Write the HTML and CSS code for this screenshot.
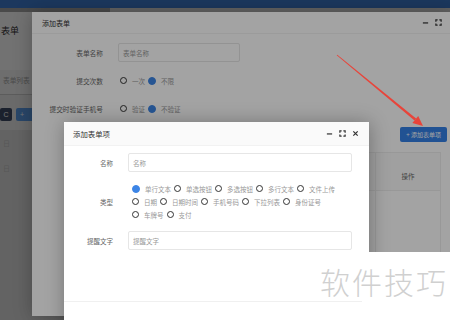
FILE: index.html
```html
<!DOCTYPE html>
<html lang="zh-CN">
<head>
    <meta charset="UTF-8">
    <title>添加表单项</title>
    <link rel="stylesheet" href="styles.css">
</head>
<body>

    <div class="top-bar"></div>

    <div class="page">
        <div class="side">
            <div class="side-head">表单</div>
            <div class="side-tab">表单列表</div>
            <div class="side-tools">
                <button class="btn-dark">C</button>
                <button class="btn-blue">+</button>
            </div>
            <div class="side-row">日</div>
            <div class="side-row">日</div>
        </div>
    </div>

    <div class="shade"></div>

    <!-- 添加表单 -->
    <div class="layer layer-outer">
        <div class="layer-head">
            <span>添加表单</span>
            <div class="layer-ctrl">
                <svg viewBox="0 0 8 8"><path d="M1 4.5h6" /></svg>
                <svg viewBox="0 0 8 8"><path d="M1 3V1h2M5 1h2v2M7 5v2H5M3 7H1V5" /></svg>
            </div>
        </div>
        <div class="outer-body">
            <div class="form-row">
                <label class="form-label wide">表单名称</label>
                <input class="field short" placeholder="表单名称">
            </div>
            <div class="form-row">
                <label class="form-label wide">提交次数</label>
                <div class="radio-group">
                    <span class="radio"><i></i>一次</span>
                    <span class="radio on"><i></i>不限</span>
                </div>
            </div>
            <div class="form-row">
                <label class="form-label wide">提交时验证手机号</label>
                <div class="radio-group">
                    <span class="radio"><i></i>验证</span>
                    <span class="radio on"><i></i>不验证</span>
                </div>
            </div>

            <div class="tool-row">
                <button class="add-btn">+ 添加表单项</button>
            </div>

            <table class="item-table">
                <thead>
                    <tr>
                        <th>名称</th>
                        <th>类型</th>
                        <th>提醒文字</th>
                        <th class="op">操作</th>
                    </tr>
                </thead>
                <tbody>
                    <tr><td></td><td></td><td></td><td></td></tr>
                </tbody>
            </table>
        </div>
    </div>

    <div class="shade shade-top"></div>

    <!-- 添加表单项 -->
    <div class="layer layer-inner">
        <div class="layer-head">
            <span>添加表单项</span>
            <div class="layer-ctrl">
                <svg viewBox="0 0 8 8"><path d="M1 4.5h6" /></svg>
                <svg viewBox="0 0 8 8"><path d="M1 3V1h2M5 1h2v2M7 5v2H5M3 7H1V5" /></svg>
                <svg viewBox="0 0 8 8"><path d="M1.5 1.5l5 5M6.5 1.5l-5 5" /></svg>
            </div>
        </div>
        <div class="inner-body">
            <div class="form-row">
                <label class="form-label">名称</label>
                <input class="field" placeholder="名称">
            </div>
            <div class="form-row auto">
                <label class="form-label">类型</label>
                <div class="radio-group wrap">
                    <span class="radio on"><i></i>单行文本</span>
                    <span class="radio"><i></i>单选按钮</span>
                    <span class="radio"><i></i>多选按钮</span>
                    <span class="radio"><i></i>多行文本</span>
                    <span class="radio"><i></i>文件上传</span>
                    <span class="radio"><i></i>日期</span>
                    <span class="radio"><i></i>日期时间</span>
                    <span class="radio"><i></i>手机号码</span>
                    <span class="radio"><i></i>下拉列表</span>
                    <span class="radio"><i></i>身份证号</span>
                    <span class="radio"><i></i>车牌号</span>
                    <span class="radio"><i></i>支付</span>
                </div>
            </div>
            <div class="form-row">
                <label class="form-label">提醒文字</label>
                <input class="field" placeholder="提醒文字">
            </div>
        </div>
        <div class="layer-foot"></div>
    </div>

    <svg class="arrow" viewBox="0 0 450 320">
        <polygon points="336.7,55.3 337.3,54.7 416.1,118.6 414.5,120.6" />
        <polygon points="423,126 412.4,123.1 418.2,116.1" />
    </svg>

    <div class="wm"><span>软件技巧</span></div>

</body>
</html>
```

FILE: styles.css
```css
* {
    box-sizing: border-box;
}

body {
    margin: 0;
    width: 450px;
    height: 320px;
    overflow: hidden;
    position: relative;
    font-family: "Noto Sans CJK SC", "Noto Sans", sans-serif;
    background-color: #dfdfdf;
    color: #333;
}

.top-bar {
    height: 8px;
    background-color: #3f7fd4;
}

/* page behind the layers */
.side {
    width: 110px;
}

.side-head {
    height: 62px;
    border-top: 4px solid #a8a8a8;
    padding: 12px 0 0 1px;
    font-size: 9px;
    background-color: #fff;
}

.side-tab {
    height: 25px;
    padding: 5px 0 0 3px;
    font-size: 6.7px;
    color: #aaa;
    background-color: #f8f8f8;
    border-bottom: 1px solid #cfcfcf;
}

.side-tools {
    display: flex;
    gap: 4px;
    height: 35px;
    padding-top: 13px;
    background-color: #efefef;
}

.side-tools button {
    height: 13px;
    border: none;
    border-radius: 2px;
    color: #fff;
    font-size: 7px;
    padding: 0;
}

.btn-dark {
    width: 12px;
    background-color: #3e4c66;
}

.btn-blue {
    width: 30px;
    background-color: #5c9eea;
    text-align: left;
    padding-left: 4px !important;
}

.side-row {
    height: 25px;
    padding: 8px 0 0 3px;
    font-size: 7px;
    color: #c4c4c4;
}

.shade {
    position: absolute;
    inset: 0;
    background-color: rgba(0, 0, 0, 0.3);
}

.shade-top {
    background-color: rgba(0, 0, 0, 0.36);
}

/* layers */
.layer {
    position: absolute;
    background-color: #fff;
    box-shadow: 1px 1px 18px rgba(0, 0, 0, 0.3);
}

.layer-outer {
    left: 32px;
    top: 12px;
    width: 420px;
    height: 304px;
}

.layer-inner {
    left: 64px;
    top: 122px;
    width: 305px;
    height: 210px;
}

.layer-head {
    display: flex;
    justify-content: space-between;
    align-items: center;
    height: 22px;
    padding: 0 10px;
    font-size: 7px;
    color: #333;
    border-bottom: 1px solid #f2f2f2;
}

.layer-inner .layer-head {
    height: 24px;
    padding-left: 9px;
    font-size: 7.4px;
    background-color: #fafafa;
}

.layer-ctrl {
    display: flex;
    gap: 6px;
}

.layer-ctrl svg {
    width: 7px;
    height: 7px;
    fill: none;
    stroke: #333;
    stroke-width: 1.4;
}

.outer-body {
    padding: 9px 5px 0 0;
}

.inner-body {
    height: 155px;
    padding: 7px 17px 0 0;
}

.layer-foot {
    border-top: 1px solid #f0f0f0;
}

.form-row {
    display: flex;
    align-items: center;
    height: 19px;
    margin-bottom: 9px;
}

.inner-body .form-row {
    margin-bottom: 10px;
}

.form-row.auto {
    height: auto;
}

.form-label {
    flex-shrink: 0;
    width: 49px;
    margin-right: 15px;
    text-align: right;
    font-size: 6.5px;
    color: #666;
}

.form-label.wide {
    width: 71px;
    font-size: 6.7px;
}

.field {
    flex: 1;
    height: 19px;
    padding: 0 4px;
    border: 1px solid #e6e6e6;
    border-radius: 2px;
    font-family: inherit;
    font-size: 6.5px;
    outline: none;
}

.field.short {
    flex: none;
    width: 122px;
}

.field::placeholder {
    color: #999;
}

.radio-group {
    display: flex;
    padding-left: 2px;
}

.radio-group.wrap {
    flex: 1;
    flex-wrap: wrap;
    padding-left: 4px;
}

.radio {
    display: inline-flex;
    align-items: center;
    height: 13px;
    margin-right: 3px;
    font-size: 6.5px;
    color: #999;
}

.radio i {
    width: 7px;
    height: 7px;
    margin-right: 5px;
    border: 1.5px solid #333;
    border-radius: 50%;
}

.radio.on i {
    width: 8px;
    height: 8px;
    border-color: #3c85e6;
    background-color: #3c85e6;
}

.tool-row {
    display: flex;
    justify-content: flex-end;
    margin-bottom: 10px;
}

.add-btn {
    height: 15px;
    padding: 0 6px;
    border: none;
    border-radius: 2px;
    background-color: #3580e6;
    color: #fff;
    font-family: inherit;
    font-size: 6px;
}

.item-table {
    width: 323px;
    margin-left: 86px;
    border-collapse: collapse;
    font-size: 6.5px;
    color: #666;
}

.item-table th {
    height: 38px;
    padding: 16px 0 8px;
    font-weight: normal;
    border: 1px solid #eee;
    background-color: #fafafa;
}

.item-table th.op {
    width: 65px;
}

.item-table td {
    height: 62px;
    border: 1px solid #eee;
}

.arrow {
    position: absolute;
    left: 0;
    top: 0;
    width: 450px;
    height: 320px;
    fill: #e8443a;
}

.wm {
    position: absolute;
    left: 362px;
    top: 252px;
    right: 0;
    bottom: 0;
    background-color: #fff;
}

.wm span {
    position: absolute;
    left: -42px;
    top: 14px;
    font-size: 30px;
    line-height: 1;
    font-weight: 300;
    letter-spacing: 2px;
    white-space: nowrap;
    color: #d0d0d0;
}
```
